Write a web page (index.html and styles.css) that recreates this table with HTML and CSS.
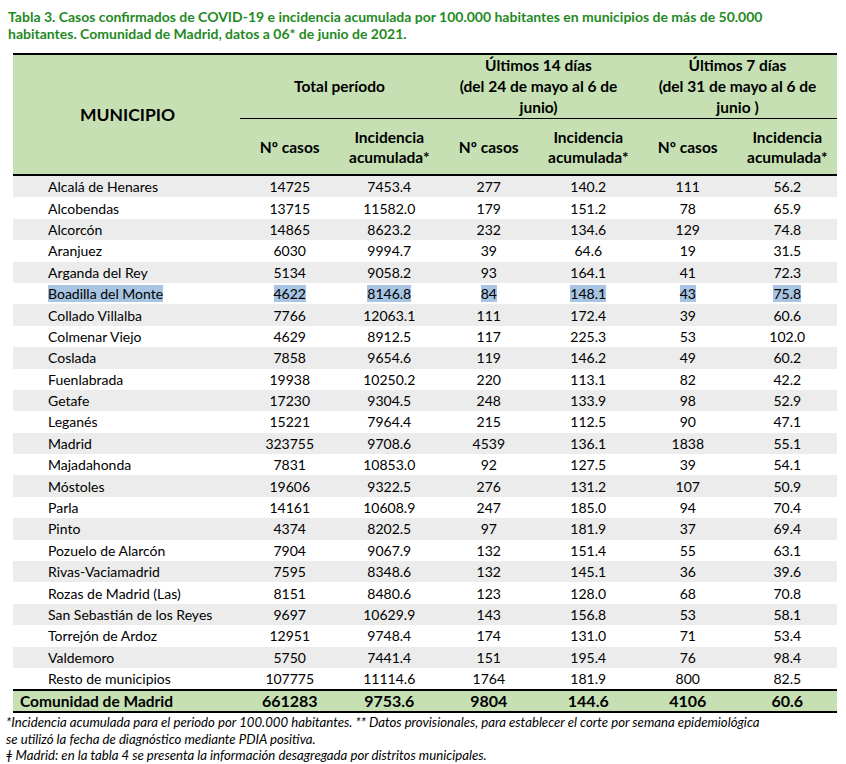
FILE: index.html
```html
<!DOCTYPE html>
<html lang="es">
<head>
<meta charset="utf-8">
<link rel="stylesheet" href="styles.css">
</head>
<body>
<h1 class="title">Tabla 3. Casos confirmados de COVID-19 e incidencia acumulada por 100.000 habitantes en municipios de más de 50.000<br>habitantes. Comunidad de Madrid, datos a 06* de junio de 2021.</h1>
<table class="data">
  <colgroup>
    <col class="c-name"><col class="c-num"><col class="c-num"><col class="c-num"><col class="c-num"><col class="c-num"><col class="c-num">
  </colgroup>
  <thead>
    <tr class="h1">
      <th rowspan="2" class="muni">MUNICIPIO</th>
      <th colspan="2" class="grp">Total período</th>
      <th colspan="2" class="grp">Últimos 14 días<br>(del 24 de mayo al 6 de<br>junio)</th>
      <th colspan="2" class="grp">Últimos 7 días<br>(del 31 de mayo al 6 de<br>junio )</th>
    </tr>
    <tr class="h2">
      <th>Nº casos</th><th>Incidencia<br>acumulada*</th>
      <th>Nº casos</th><th>Incidencia<br>acumulada*</th>
      <th>Nº casos</th><th>Incidencia<br>acumulada*</th>
    </tr>
  </thead>
  <tbody>
    <tr><td class="n">Alcalá de Henares</td><td>14725</td><td>7453.4</td><td>277</td><td>140.2</td><td>111</td><td>56.2</td></tr>
    <tr><td class="n">Alcobendas</td><td>13715</td><td>11582.0</td><td>179</td><td>151.2</td><td>78</td><td>65.9</td></tr>
    <tr><td class="n">Alcorcón</td><td>14865</td><td>8623.2</td><td>232</td><td>134.6</td><td>129</td><td>74.8</td></tr>
    <tr><td class="n">Aranjuez</td><td>6030</td><td>9994.7</td><td>39</td><td>64.6</td><td>19</td><td>31.5</td></tr>
    <tr><td class="n">Arganda del Rey</td><td>5134</td><td>9058.2</td><td>93</td><td>164.1</td><td>41</td><td>72.3</td></tr>
    <tr class="sel"><td class="n"><span class="hl">Boadilla del Monte</span></td><td><span class="hl">4622</span></td><td><span class="hl">8146.8</span></td><td><span class="hl">84</span></td><td><span class="hl">148.1</span></td><td><span class="hl">43</span></td><td><span class="hl">75.8</span></td></tr>
    <tr><td class="n">Collado Villalba</td><td>7766</td><td>12063.1</td><td>111</td><td>172.4</td><td>39</td><td>60.6</td></tr>
    <tr><td class="n">Colmenar Viejo</td><td>4629</td><td>8912.5</td><td>117</td><td>225.3</td><td>53</td><td>102.0</td></tr>
    <tr><td class="n">Coslada</td><td>7858</td><td>9654.6</td><td>119</td><td>146.2</td><td>49</td><td>60.2</td></tr>
    <tr><td class="n">Fuenlabrada</td><td>19938</td><td>10250.2</td><td>220</td><td>113.1</td><td>82</td><td>42.2</td></tr>
    <tr><td class="n">Getafe</td><td>17230</td><td>9304.5</td><td>248</td><td>133.9</td><td>98</td><td>52.9</td></tr>
    <tr><td class="n">Leganés</td><td>15221</td><td>7964.4</td><td>215</td><td>112.5</td><td>90</td><td>47.1</td></tr>
    <tr><td class="n">Madrid</td><td>323755</td><td>9708.6</td><td>4539</td><td>136.1</td><td>1838</td><td>55.1</td></tr>
    <tr><td class="n">Majadahonda</td><td>7831</td><td>10853.0</td><td>92</td><td>127.5</td><td>39</td><td>54.1</td></tr>
    <tr><td class="n">Móstoles</td><td>19606</td><td>9322.5</td><td>276</td><td>131.2</td><td>107</td><td>50.9</td></tr>
    <tr><td class="n">Parla</td><td>14161</td><td>10608.9</td><td>247</td><td>185.0</td><td>94</td><td>70.4</td></tr>
    <tr><td class="n">Pinto</td><td>4374</td><td>8202.5</td><td>97</td><td>181.9</td><td>37</td><td>69.4</td></tr>
    <tr><td class="n">Pozuelo de Alarcón</td><td>7904</td><td>9067.9</td><td>132</td><td>151.4</td><td>55</td><td>63.1</td></tr>
    <tr><td class="n">Rivas-Vaciamadrid</td><td>7595</td><td>8348.6</td><td>132</td><td>145.1</td><td>36</td><td>39.6</td></tr>
    <tr><td class="n">Rozas de Madrid (Las)</td><td>8151</td><td>8480.6</td><td>123</td><td>128.0</td><td>68</td><td>70.8</td></tr>
    <tr><td class="n">San Sebastián de los Reyes</td><td>9697</td><td>10629.9</td><td>143</td><td>156.8</td><td>53</td><td>58.1</td></tr>
    <tr><td class="n">Torrejón de Ardoz</td><td>12951</td><td>9748.4</td><td>174</td><td>131.0</td><td>71</td><td>53.4</td></tr>
    <tr><td class="n">Valdemoro</td><td>5750</td><td>7441.4</td><td>151</td><td>195.4</td><td>76</td><td>98.4</td></tr>
    <tr><td class="n">Resto de municipios</td><td>107775</td><td>11114.6</td><td>1764</td><td>181.9</td><td>800</td><td>82.5</td></tr>
  </tbody>
  <tfoot>
    <tr class="total"><td class="n">Comunidad de Madrid</td><td>661283</td><td>9753.6</td><td>9804</td><td>144.6</td><td>4106</td><td>60.6</td></tr>
  </tfoot>
</table>
<div class="notes">
  <p>*Incidencia acumulada para el periodo por 100.000 habitantes. ** Datos provisionales, para establecer el corte por semana epidemiológica<br>se utilizó la fecha de diagnóstico mediante PDIA positiva.</p>
  <p>ǂ Madrid: en la tabla 4 se presenta la información desagregada por distritos municipales.</p>
</div>
</body>
</html>
```

FILE: styles.css
```css
html, body {
  margin: 0;
  padding: 0;
  background: #ffffff;
}

body {
  font-family: "Lato", "Open Sans", sans-serif;
  color: #000;
  padding: 8px 9px 0 6px;
}

.title {
  margin: 0 0 0 2px;
  font-size: 14px;
  line-height: 17px;
  font-weight: 700;
  color: #1f8a24;
}

.data {
  margin: 11px 0 0 7px;
  border-collapse: collapse;
  width: 824px;
  table-layout: fixed;
  font-size: 14px;
}

.c-name { width: 227px; }
.c-num { width: 99.5px; }

.data thead th {
  background: #c6e0b4;
  font-weight: 700;
  padding: 0;
  text-align: center;
  vertical-align: middle;
}

.h1 th {
  border-top: 2px solid #000;
  height: 62px;
  font-size: 15.5px;
  line-height: 21px;
}

.h1 .muni {
  font-size: 17.5px;
  border-bottom: 2px solid #000;
  padding-left: 2px;
}

.h1 .grp {
  border-bottom: 1px solid #000;
}

.h2 th {
  height: 55px;
  font-size: 15.5px;
  line-height: 20px;
  border-bottom: 2px solid #000;
}

.data tbody td {
  height: 21.4px;
  padding: 0;
  text-align: center;
  line-height: 21px;
  vertical-align: middle;
}

.data tbody tr:nth-child(odd) td {
  background: #ececec;
}

.data td.n {
  text-align: left;
  padding-left: 35px;
}

.hl {
  background: #a7c4e2;
}

.total td {
  background: #c6e0b4;
  border-top: 2px solid #000;
  border-bottom: 2px solid #000;
  font-weight: 700;
  font-size: 16px;
  text-align: center;
  height: 20px;
  padding: 0;
  line-height: 20px;
}

.total td.n {
  padding-left: 7px;
  font-size: 15.5px;
}

.notes {
  font-style: italic;
  font-size: 13.2px;
  line-height: 16.5px;
  margin-top: 1px;
}

.notes p {
  margin: 0;
}
```
